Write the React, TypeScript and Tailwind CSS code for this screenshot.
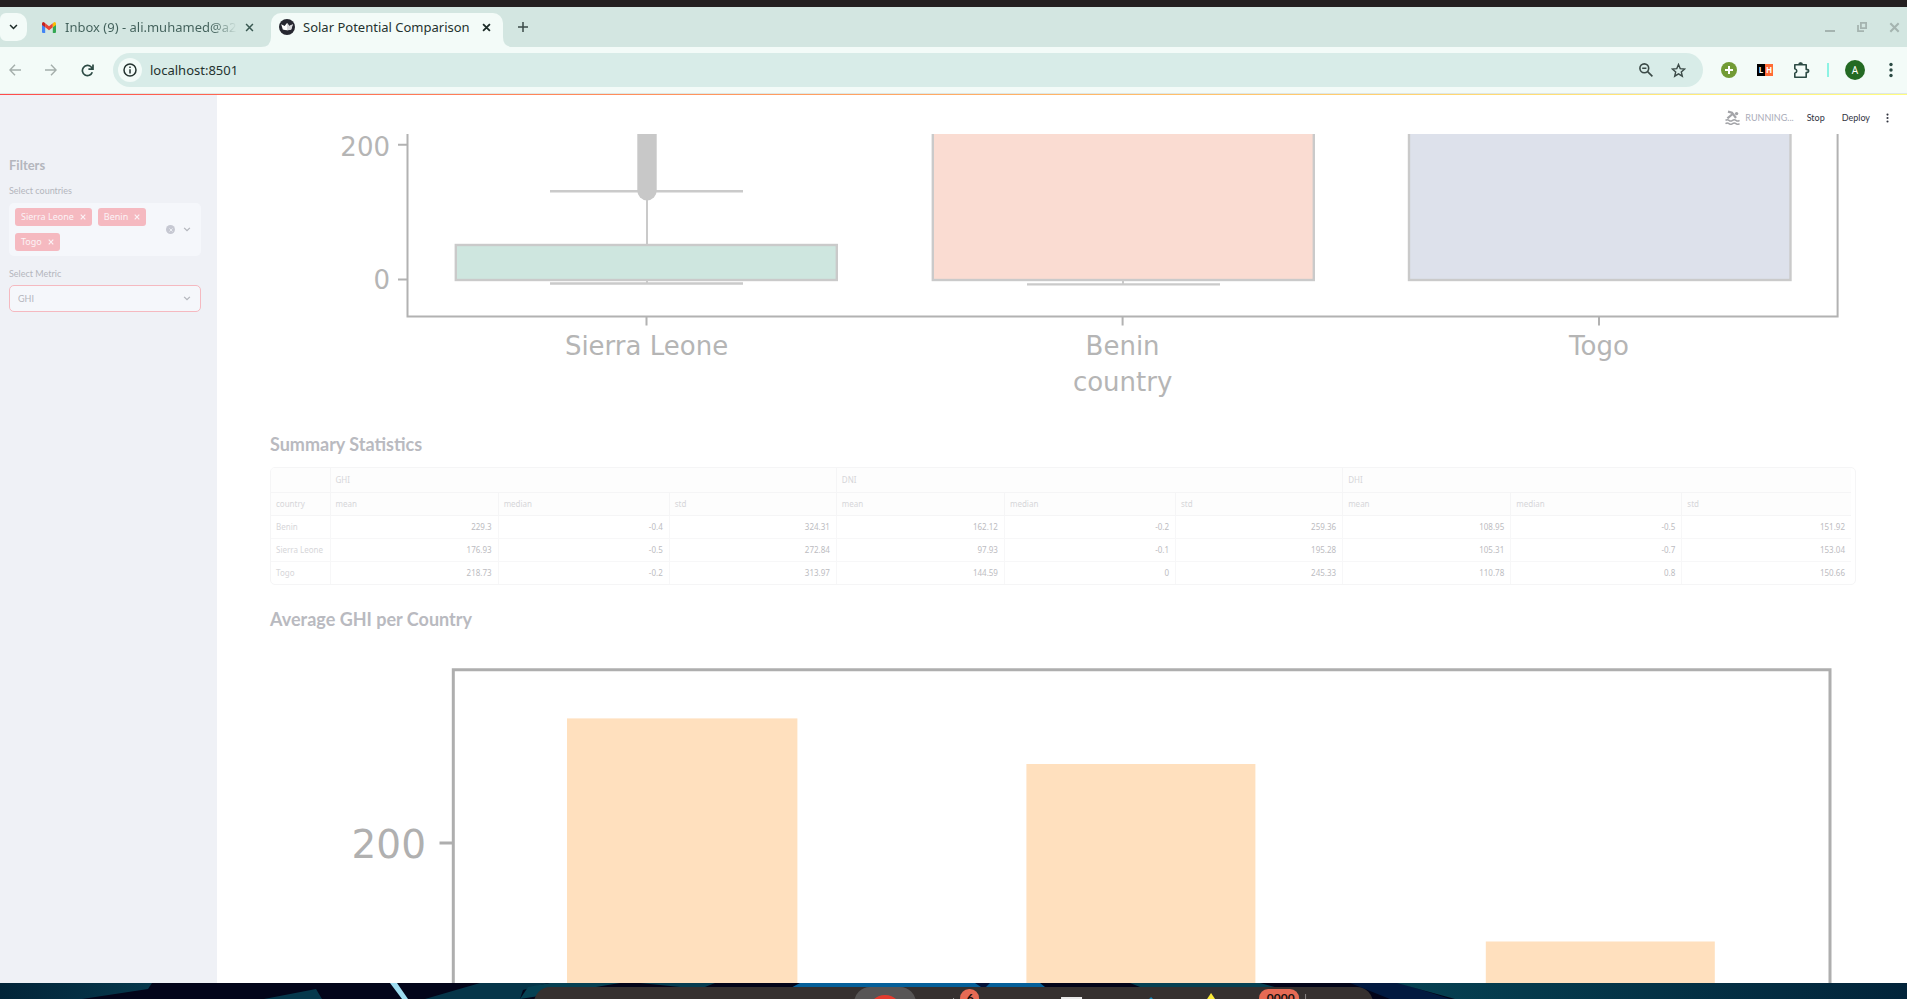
import type { ReactNode } from 'react';

const UI = "font-['Noto_Sans',sans-serif]";
const APP = "font-['Lato',sans-serif]";

function XIcon({ className, w = 2 }: { className: string; w?: number }) {
  return (
    <svg viewBox="0 0 10 10" className={className} fill="none" stroke="currentColor" strokeWidth={w}>
      <path d="M1.2 1.2 8.8 8.8M8.8 1.2 1.2 8.8" />
    </svg>
  );
}

function Chevron({ className }: { className: string }) {
  return (
    <svg viewBox="0 0 10 7" className={className} fill="none" stroke="currentColor" strokeWidth="1.8">
      <path d="M1 1.2 5 5.2 9 1.2" />
    </svg>
  );
}

function Dots({ className }: { className: string }) {
  return (
    <svg viewBox="0 0 4 16" className={className} fill="currentColor">
      <circle cx="2" cy="2.5" r="1.7" />
      <circle cx="2" cy="8" r="1.7" />
      <circle cx="2" cy="13.5" r="1.7" />
    </svg>
  );
}

function TabStrip() {
  return (
    <div className={`flex h-10 shrink-0 items-stretch bg-[#d3e6e1] ${UI}`}>
      <button aria-label="Search tabs" className="mt-[6px] flex h-7 w-[27px] shrink-0 items-center justify-center rounded-r-[10px] rounded-l-[6px] bg-[#f3fbf8] text-[#1c2b28]">
        <Chevron className="h-[6px] w-[9px]" />
      </button>
      <div className="flex w-[244px] shrink-0 items-center pr-[17px] pl-[15px]">
        <svg viewBox="0 0 14 11" className="h-[11px] w-[14px] shrink-0">
          <path d="M0 1.6V10q0 1 1 1h2.2V4.9z" fill="#4285f4" />
          <path d="M14 1.6V10q0 1-1 1h-2.2V4.9z" fill="#34a853" />
          <path d="M3.2 1.2 7 4.2l3.8-3v4L7 8.2l-3.8-3z" fill="#ea4335" />
          <path d="M0 1.6Q.2-.4 2 .2l1.2 1v4L0 2.9z" fill="#c5221f" />
          <path d="M14 1.6Q13.8-.4 12 .2l-1.2 1v4L14 2.9z" fill="#fbbc04" />
        </svg>
        <span className="ml-[9px] w-[172px] overflow-hidden bg-linear-to-r from-[#41605a] from-85% to-[#d3e6e1] bg-clip-text text-[13px] leading-5 whitespace-nowrap text-transparent">
          Inbox (9) - ali.muhamed@a2
        </span>
        <button aria-label="Close tab" className="ml-auto text-[#3a5952]">
          <XIcon className="size-[9px]" w={1.7} />
        </button>
      </div>
      <div className="relative mt-[6px] flex w-[232px] shrink-0 items-center rounded-t-[10px] bg-[#f3fbf8] px-2 pb-[6px]">
        <svg viewBox="0 0 252 10" preserveAspectRatio="none" className="absolute bottom-0 -left-[10px] h-[10px] w-[252px]" fill="#f3fbf8">
          <path d="M0 10Q10 10 10 0V10zM252 10Q242 10 242 0V10z" />
        </svg>
        <svg viewBox="0 0 16 16" className="size-4 shrink-0">
          <circle cx="8" cy="8" r="8" fill="#262730" />
          <path d="M2.2 5.3 5.6 7 8 4l2.4 3 3.4-1.7-1.6 5.2q-4.2 1.4-8.4 0z" fill="#fff" />
          <path d="M8 4l2.4 3 3.4-1.7-1.6 5.2q-2 .8-4.2.8z" fill="#d9d9dc" />
        </svg>
        <span className="ml-2 text-[13px] leading-5 whitespace-nowrap text-[#24322f]">Solar Potential Comparison</span>
        <button aria-label="Close tab" className="ml-auto pr-1 text-[#1c2b28]">
          <XIcon className="size-[9px]" />
        </button>
      </div>
      <button aria-label="New tab" className="ml-[15px] text-[#3b4a47]">
        <svg viewBox="0 0 10 10" className="size-[10px]" stroke="currentColor" strokeWidth="1.5">
          <path d="M5 0v10M0 5h10" />
        </svg>
      </button>
      <div className="ml-auto flex items-center gap-[22px] pr-[7px] text-[#a5b4b0]">
        <button aria-label="Minimize">
          <svg viewBox="0 0 10 10" className="size-[10px]" fill="currentColor"><path d="M0 8h10v2H0z" /></svg>
        </button>
        <button aria-label="Restore">
          <svg viewBox="0 0 10 10" className="size-[10px]" fill="none" stroke="currentColor" strokeWidth="1.8">
            <path d="M3.9.9h5.2v5.2H3.9zM1 3v6.1h6" />
          </svg>
        </button>
        <button aria-label="Close window">
          <XIcon className="size-[11px]" w={1.9} />
        </button>
      </div>
    </div>
  );
}

function Toolbar() {
  return (
    <div className={`flex h-[46px] shrink-0 items-center bg-[#f3fbf8] ${UI}`}>
      <div className="flex w-[113px] shrink-0 items-center gap-6 pl-[9px]">
        <button aria-label="Back" className="text-[#a4aeab]">
          <svg viewBox="0 0 12 12" className="size-3" fill="none" stroke="currentColor" strokeWidth="1.4"><path d="M12 6H1M6 .7.9 6 6 11.3" /></svg>
        </button>
        <button aria-label="Forward" className="text-[#a4aeab]">
          <svg viewBox="0 0 12 12" className="size-3" fill="none" stroke="currentColor" strokeWidth="1.4"><path d="M0 6h11M6 .7 11.1 6 6 11.3" /></svg>
        </button>
        <button aria-label="Reload" className="text-[#2c4a44]">
          <svg viewBox="0 0 13 13" className="size-[13px]" fill="none" stroke="currentColor" strokeWidth="1.7">
            <path d="M11.3 8.3A5.1 5.1 0 1 1 10.2 3L11.6 4.6M12 .5v4.6H7.4" />
          </svg>
        </button>
      </div>
      <div className="flex h-[34px] flex-1 items-center rounded-full bg-[#d8ece8] pr-[17px] pl-[5px]">
        <button aria-label="Site information" className="flex size-6 items-center justify-center rounded-full bg-[#f3fbf8] text-[#24322f]">
          <svg viewBox="0 0 14 14" className="size-[14px]" fill="none" stroke="currentColor" strokeWidth="1.5">
            <circle cx="7" cy="7" r="6" />
            <path d="M7 6.2v4.2M7 3.6v1.5" />
          </svg>
        </button>
        <input aria-label="Address" defaultValue="localhost:8501" className="ml-2 h-6 min-w-0 flex-1 bg-transparent text-[13px] text-[#24322f] outline-none" />
        <button aria-label="Zoom" className="mr-[18px] text-[#3b4a47]">
          <svg viewBox="0 0 14 14" className="size-[14px]" fill="none" stroke="currentColor" strokeWidth="1.6">
            <circle cx="5.3" cy="5.3" r="4.4" />
            <path d="M8.6 8.6 13.4 13.4M3.2 5.3h4.2" />
          </svg>
        </button>
        <button aria-label="Bookmark this tab" className="text-[#3b4a47]">
          <svg viewBox="0 0 15 15" className="size-[15px]" fill="none" stroke="currentColor" strokeWidth="1.4">
            <path d="M7.5 1.5 9.2 5.6 13.7 6 10.3 8.9l1 4.3-3.8-2.3-3.8 2.3 1-4.3L1.3 6l4.5-.4z" />
          </svg>
        </button>
      </div>
      <div className="flex shrink-0 items-center pr-[14px] pl-[18px]">
        <button aria-label="Add extension">
          <svg viewBox="0 0 16 16" className="size-4"><circle cx="8" cy="8" r="8" fill="#729b35" /><path d="M8 4v8M4 8h8" stroke="#fff" strokeWidth="2" /></svg>
        </button>
        <button aria-label="LH extension" className="ml-5 flex h-3 w-4 text-center text-[8px] leading-3 font-bold text-white">
          <span className="w-2 bg-black">L</span>
          <span className="w-2 bg-[#ff6b35]">H</span>
        </button>
        <button aria-label="Extensions" className="ml-[20px] text-[#2c4a44]">
          <svg viewBox="0 0 17 17" className="size-[17px]" fill="none" stroke="currentColor" strokeWidth="1.6" strokeLinejoin="round">
            <path d="M1.8 2.8h11.4v4.6q2.4 0 2.4 1.6t-2.4 1.6v4.6H1.8v-4q2-.6 2-2.2t-2-2.2z" />
            <path d="M6 2.2a1.6 1.6 0 0 1 3.2 0z" fill="currentColor" stroke="none" />
            <path d="M6 2.6Q6 1 7.6 1t1.6 1.6" />
          </svg>
        </button>
        <span className="ml-[17px] h-[14px] w-[2px] bg-[#8cf3e4]" />
        <button aria-label="Profile" className="ml-4 size-5 rounded-full bg-[#246a24] text-center text-[10px] leading-5 text-white">A</button>
        <button aria-label="Browser menu" className="ml-6 text-[#2c4a44]">
          <Dots className="h-4 w-1" />
        </button>
      </div>
    </div>
  );
}

function Chip({ children }: { children: ReactNode }) {
  return (
    <button className={`flex h-[18px] items-center gap-[6px] rounded-[3px] bg-[#f5b9c0] px-[6px] text-[9px] leading-[18px] text-[#fbf3f6] ${UI}`}>
      {children}
      <XIcon className="size-[6px]" w={1.9} />
    </button>
  );
}

function Sidebar() {
  return (
    <aside className="w-[217px] shrink-0 bg-[#eff1f6] pt-[59px] pr-4 pl-[9px] text-[#b4b6bd]">
      <h2 className="text-[13px] leading-[22px] font-bold">Filters</h2>
      <p id="countries" className="mt-[7px] mb-1 text-[9px] leading-4">Select countries</p>
      <div role="group" aria-labelledby="countries" className="flex items-center rounded-[5px] bg-[#f5f7fb] py-[5px] pr-[10px] pl-[6px]">
        <div className="flex flex-1 flex-wrap gap-x-[6px] gap-y-[7px]">
          <Chip>Sierra Leone</Chip>
          <Chip>Benin</Chip>
          <Chip>Togo</Chip>
        </div>
        <button aria-label="Clear all" className="mr-2 flex size-[9px] items-center justify-center rounded-full bg-[#c6c8d2] text-[#f5f7fb]">
          <XIcon className="size-1" w={2} />
        </button>
        <button aria-label="Open country list">
          <Chevron className="h-[5px] w-[8px]" />
        </button>
      </div>
      <label htmlFor="metric" className="mt-[10px] mb-[3px] block text-[9px] leading-4">Select Metric</label>
      <div className="flex h-[27px] items-center rounded-[5px] border border-[#f5b9c0] bg-[#f5f7fb] pr-[9px] pl-2">
        <select id="metric" defaultValue="GHI" className="min-w-0 flex-1 appearance-none bg-transparent text-[9px] outline-none">
          <option>GHI</option>
          <option>DNI</option>
          <option>DHI</option>
        </select>
        <Chevron className="pointer-events-none h-[5px] w-[8px]" />
      </div>
    </aside>
  );
}

function BoxPlot() {
  return (
    <svg viewBox="270 134 1586 275" className="block w-full font-['DejaVu_Sans',sans-serif]" role="img" aria-label="Box plot by country">
      <g fill="none" stroke="#cacaca" strokeWidth="2.4">
        <path d="M550 191.3H743M550 283.5H743M1027 284.4H1220" />
        <path d="M647 195V245M647 280v4M1123 280v4" strokeWidth="2" />
        <rect x="455.8" y="245" width="381" height="35" fill="#cee6df" />
        <rect x="932.8" y="120" width="381" height="160" fill="#fadcd2" />
        <rect x="1409" y="120" width="381.5" height="160" fill="#dde1eb" />
      </g>
      <rect x="637.3" y="100" width="19.4" height="100.4" rx="9.7" fill="#c8c8c8" />
      <path d="M407.5 120V316.4H1837.6V120M398 144.8h9.5M398 279.4h9.5M646.5 316v9.5M1122.6 316v9.5M1599 316v9.5" fill="none" stroke="#b2b2b2" strokeWidth="2" />
      <g fill="#b5b5b5" fontSize="26">
        <g textAnchor="end">
          <text x="390" y="156">200</text>
          <text x="390" y="289">0</text>
        </g>
        <g textAnchor="middle">
          <text x="646.5" y="355">Sierra Leone</text>
          <text x="1122.6" y="355">Benin</text>
          <text x="1599" y="355">Togo</text>
          <text x="1122.6" y="391">country</text>
        </g>
      </g>
    </svg>
  );
}

function BarChart() {
  return (
    <svg viewBox="270 660 1586 500" className="block w-full font-['DejaVu_Sans',sans-serif]" role="img" aria-label="Average GHI per country">
      <g fill="#ffe0be">
        <rect x="567" y="718.4" width="230.4" height="600" />
        <rect x="1026.4" y="764" width="229" height="600" />
        <rect x="1485.8" y="941.5" width="229" height="400" />
      </g>
      <path d="M453.3 1200V669.8H1830V1200M439.5 843h14" fill="none" stroke="#aeaeae" strokeWidth="3" />
      <text x="426" y="858" textAnchor="end" fontSize="39" fill="#b0b0b0">200</text>
    </svg>
  );
}

const rows = [
  ['Benin', '229.3', '-0.4', '324.31', '162.12', '-0.2', '259.36', '108.95', '-0.5', '151.92'],
  ['Sierra Leone', '176.93', '-0.5', '272.84', '97.93', '-0.1', '195.28', '105.31', '-0.7', '153.04'],
  ['Togo', '218.73', '-0.2', '313.97', '144.59', '0', '245.33', '110.78', '0.8', '150.66'],
];

const colWidths = ['w-[59px]', 'w-[168px]', 'w-[171px]', 'w-[167px]', 'w-[168px]', 'w-[171px]', 'w-[167px]', 'w-[168px]', 'w-[171px]', 'w-[169px]'];

function StatsTable() {
  return (
    <div className="overflow-hidden rounded-[5px] border border-[#f5f5f6] pr-1">
      <table className={`w-full table-fixed border-collapse text-[8px] leading-3 ${UI}`}>
        <colgroup>
          {colWidths.map((w, i) => <col key={i} className={w} />)}
        </colgroup>
        <thead className="bg-[#fdfdfd] text-left text-[#d6d6d9]">
          <tr className="h-6 border-b border-[#f5f5f6]">
            <th className="border-r border-[#f5f5f6]" />
            {['GHI', 'DNI', 'DHI'].map((g) => (
              <th key={g} colSpan={3} className="border-r border-[#f5f5f6] p-0 pl-[5px] font-normal last:border-r-0">{g}</th>
            ))}
          </tr>
          <tr className="h-[23px] border-b border-[#f5f5f6]">
            {['country', 'mean', 'median', 'std', 'mean', 'median', 'std', 'mean', 'median', 'std'].map((h, i) => (
              <th key={i} className="border-r border-[#f5f5f6] p-0 pl-[5px] font-normal last:border-r-0">{h}</th>
            ))}
          </tr>
        </thead>
        <tbody className="text-right text-[#bcbcc1]">
          {rows.map((r) => (
            <tr key={r[0]} className="h-[23px] border-b border-[#f7f7f8] last:border-b-0">
              <th className="border-r border-[#f7f7f8] p-0 pl-[5px] text-left font-normal whitespace-nowrap text-[#d6d6d9]">{r[0]}</th>
              {r.slice(1).map((v, i) => (
                <td key={i} className="border-r border-[#f7f7f8] p-0 pr-[6px] last:border-r-0">{v}</td>
              ))}
            </tr>
          ))}
        </tbody>
      </table>
    </div>
  );
}

function Main() {
  return (
    <main className="flex min-w-0 flex-1 flex-col overflow-hidden bg-white">
      <header className="flex h-[39px] shrink-0 items-center justify-end pt-[6px] pr-[18px] text-[9px] text-[#31333f]">
        <svg viewBox="0 0 15 15" className="h-[15px] w-[15px]" fill="none" stroke="#a3a4a8" strokeWidth="1.5">
          <path d="M3 1.6 7 2.6 11 8M7.6 4 2.4 8.4" strokeWidth="2.2" />
          <circle cx="11.6" cy="3.6" r="1.7" fill="#a3a4a8" stroke="none" />
          <path d="M.5 10.4q1.8-1.4 3.5 0t3.5 0 3.5 0 3.5 0M.5 13.6q1.8-1.4 3.5 0t3.5 0 3.5 0 3.5 0" />
        </svg>
        <span className="mr-[13px] ml-[5px] text-[#a9abb8]">RUNNING...</span>
        <button className="mr-[17px]">Stop</button>
        <button className="mr-4">Deploy</button>
        <button aria-label="App menu"><Dots className="h-[10px] w-[3px]" /></button>
      </header>
      <div className="min-h-0 flex-1 overflow-hidden pr-[51px] pl-[53px] text-[#b9bac0]">
        <BoxPlot />
        <h3 className="mt-[22px] mb-[10px] text-[18px] leading-[26px] font-bold">Summary Statistics</h3>
        <StatsTable />
        <h3 className="mt-[21px] mb-[28px] text-[18px] leading-[26px] font-bold">Average GHI per Country</h3>
        <BarChart />
      </div>
    </main>
  );
}

function Desktop() {
  return (
    <footer className="relative h-4 shrink-0 overflow-hidden bg-[#03051a]">
      <svg viewBox="0 0 1907 16" preserveAspectRatio="none" className="block h-4 w-full">
        <defs>
          <linearGradient id="right" x1="0" x2="1">
            <stop offset="0" stopColor="#064152" />
            <stop offset="1" stopColor="#02243a" />
          </linearGradient>
          <linearGradient id="left" x1="0" x2="1">
            <stop offset="0" stopColor="#022438" />
            <stop offset="1" stopColor="#06384c" />
          </linearGradient>
        </defs>
        <path d="M0 0H152L148 6 82 16H0z" fill="url(#left)" />
        <path d="M264 16 316 6 322 16z" fill="#06384c" />
        <path d="M390 0H397L408 16H402z" fill="#9edcf0" />
        <path d="M425 16 480 0H548L523 7 520 16z" fill="#053549" />
        <path d="M520 16 528 4 550 0H620L590 5z" fill="#064153" />
        <path d="M640 0H715L700 6z" fill="#063c50" />
        <path d="M800 0H1040L1050 8H785z" fill="#05609a" />
        <path d="M975 0h15l-6 6z" fill="#02123a" />
        <path d="M1130 0H1260L1290 8H1150z" fill="#064153" />
        <path d="M1350 0H1400L1450 16H1390z" fill="#021a40" />
        <path d="M1397 0H1907V16H1455z" fill="url(#right)" />
      </svg>
      <div className="absolute top-1 left-[28%] h-12 w-[44%] overflow-hidden rounded-t-[16px] bg-[#35302f]">
        <svg viewBox="533 987 839 12" preserveAspectRatio="none" className="block h-3 w-full">
          <rect x="853" y="987" width="62" height="40" rx="16" fill="#575555" />
          <circle cx="884" cy="1012" r="17" fill="#e33b2e" />
          <path d="M952.5 998v2" stroke="#999" />
          <rect x="959" y="989" width="19" height="22" rx="9" fill="#e66a54" />
          <path d="M1060 997h21v3h-21z" fill="#e8e8e8" />
          <path d="M1148 999l2-2 2 2z" fill="#1a86b8" />
          <path d="M1206 999l4-6 4 6z" fill="#f8e838" />
          <rect x="1258" y="989" width="40" height="22" rx="9" fill="#e66a54" />
          <path d="M1304.5 994v6" stroke="#8b8685" />
        </svg>
        <div className="absolute top-1 left-[52%] -translate-x-1/2 text-[12px] leading-[14px] font-bold text-[#1a1210]">6</div>
        <div className="absolute top-1 left-[89%] -translate-x-1/2 text-[12px] leading-[14px] font-bold text-[#1a1210]">0000</div>
      </div>
    </footer>
  );
}

export default function App() {
  return (
    <div className={`flex h-screen flex-col overflow-hidden bg-[#231f20] pt-[7px] ${APP}`}>
      <TabStrip />
      <Toolbar />
      <div className="h-px shrink-0 bg-[#dfe7e4]" />
      <div className="h-px shrink-0 bg-linear-to-r from-[#ff4b4b] to-[#fffd80]" />
      <div className="flex min-h-0 flex-1">
        <Sidebar />
        <Main />
      </div>
      <Desktop />
    </div>
  );
}
